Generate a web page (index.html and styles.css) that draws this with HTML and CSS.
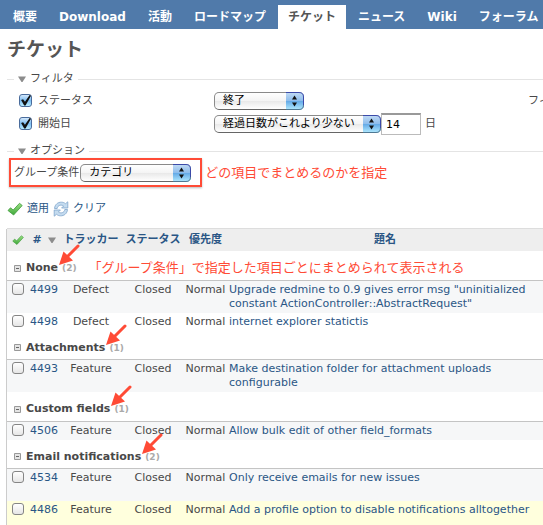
FILE: index.html
```html
<!DOCTYPE html>
<html lang="ja">
<head>
<meta charset="utf-8">
<title>チケット</title>
<link rel="stylesheet" href="styles.css">
</head>
<body>
<svg class="defs" aria-hidden="true">
  <defs>
    <linearGradient id="green" x1="0" y1="0" x2="0" y2="1"><stop offset="0" stop-color="#9be083"/><stop offset="1" stop-color="#3fa83a"/></linearGradient>
    <linearGradient id="knob" x1="0" y1="0" x2="0" y2="1"><stop offset="0" stop-color="#c4dcf5"/><stop offset=".48" stop-color="#8ebdec"/><stop offset=".5" stop-color="#62a8e6"/><stop offset="1" stop-color="#b4ecff"/></linearGradient>
    <symbol id="tick" viewBox="0 0 16 16"><path d="M1 9.500 3.500 6.800 6.200 9 12.500 2.300 15.200 4.500 6.600 14z" fill="url(#green)" stroke="#3f9a3c" stroke-width=".8" stroke-linejoin="round"/></symbol>
    <symbol id="reload" viewBox="0 0 16 16"><g fill="#c4dbef" stroke="#7fa5cb" stroke-width=".8" stroke-linejoin="round"><path d="M1.500 7.500C1.800 3.500 5 1 8.500 1.200c1.700 0 3 .6 4 1.500L14.800.800V7H8.600l2-2C8.200 3.200 4.600 4.300 4.200 7.500z"/><path d="M14.500 8.500c-.3 4-3.500 6.500-7 6.300-1.700 0-3-.6-4-1.500L1.200 15.200V9h6.200l-2 2c2.400 1.800 6 .7 6.400-2.500z"/></g></symbol>
    <symbol id="updown" viewBox="0 0 18 18"><path d="M0 0h13q5 0 5 5v8q0 5-5 5H0z" fill="url(#knob)"/><path d="M0 .5h13q4.500 0 4.500 4.500v8" fill="none" stroke="#3c4aa8"/><path d="M17.500 13q0 4.500-4.500 4.500H0" fill="none" stroke="#4f7893"/><path d="M6 7.500 8.500 3.500 11 7.500zM6 10.500h5L8.500 14.500z" fill="#111"/></symbol>
    <symbol id="arrow" viewBox="0 0 22 22"><path d="M20 2 10 12" stroke="#ff4b36" stroke-width="3" stroke-linecap="round"/><path d="M1 21 5.500 7.500 15 16.500z" fill="#ff4b36"/></symbol>
    <symbol id="minus" viewBox="0 0 7 7"><path d="M.5.5h6v6h-6z" fill="#e4e4e4" stroke="#999"/><path d="M2 3.500h3" stroke="#666"/></symbol>
    <symbol id="down" viewBox="0 0 8 6"><path d="M0 .5h8L4.500 6h-1z" fill="#8c8c8c"/></symbol>
  </defs>
</svg>
<nav class="menu">
  <a href="#">概要</a><a href="#">Download</a><a href="#">活動</a><a href="#">ロードマップ</a><a href="#" class="selected">チケット</a><a href="#">ニュース</a><a href="#">Wiki</a><a href="#">フォーラム</a>
</nav>
<main class="content">
  <h1>チケット</h1>
  <form>
    <section class="panel">
      <h2><svg class="fold"><use href="#down"/></svg>フィルタ</h2>
      <div class="filters">
        <div class="filter">
          <label class="name"><input type="checkbox" class="check" checked>ステータス</label>
          <span class="popup status"><select aria-label="ステータス"><option>終了</option></select><svg><use href="#updown"/></svg></span>
          <span class="add">フィルタ追加</span>
        </div>
        <div class="filter">
          <label class="name"><input type="checkbox" class="check" checked>開始日</label>
          <span class="popup period"><select aria-label="開始日"><option>経過日数がこれより少ない</option></select><svg><use href="#updown"/></svg></span>
          <input type="text" class="days" id="days" value="14"><label class="unit" for="days">日</label>
        </div>
      </div>
    </section>
    <section class="panel">
      <h2><svg class="fold"><use href="#down"/></svg>オプション</h2>
      <div class="options">
        <div class="grouping">
          <label for="group">グループ条件</label>
          <span class="popup group"><select id="group"><option>カテゴリ</option></select><svg><use href="#updown"/></svg></span>
        </div>
        <span class="note">どの項目でまとめるのかを指定</span>
      </div>
    </section>
    <div class="actions">
      <a href="#"><svg><use href="#tick"/></svg>適用</a>
      <a href="#"><svg><use href="#reload"/></svg>クリア</a>
    </div>
  </form>
  <table class="issues">
    <colgroup><col class="c-check"><col class="c-id"><col class="c-mid"><col class="c-mid"><col class="c-priority"><col></colgroup>
    <thead>
      <tr><th><svg class="all"><use href="#tick"/></svg></th><th><a href="#">#</a> <svg class="sort"><use href="#down"/></svg></th><th><a href="#">トラッカー</a></th><th><a href="#">ステータス</a></th><th><a href="#">優先度</a></th><th><a href="#">題名</a></th></tr>
    </thead>
    <tbody>
      <tr class="head"><td colspan="6"><div><svg class="minus"><use href="#minus"/></svg><b>None<svg class="arrow"><use href="#arrow"/></svg></b><span class="count">(2)</span><span class="note">「グループ条件」で指定した項目ごとにまとめられて表示される</span></div></td></tr>
      <tr class="odd tall"><td><input type="checkbox" class="pick" aria-label="4499"></td><td><a href="#">4499</a></td><td>Defect</td><td>Closed</td><td>Normal</td><td class="subject"><a href="#">Upgrade redmine to 0.9 gives error msg "uninitialized<br>constant ActionController::AbstractRequest"</a></td></tr>
      <tr><td><input type="checkbox" class="pick" aria-label="4498"></td><td><a href="#">4498</a></td><td>Defect</td><td>Closed</td><td>Normal</td><td class="subject"><a href="#">internet explorer statictis</a></td></tr>
      <tr class="head"><td colspan="6"><div><svg class="minus"><use href="#minus"/></svg><b>Attachments<svg class="arrow"><use href="#arrow"/></svg></b><span class="count">(1)</span></div></td></tr>
      <tr class="odd tall"><td><input type="checkbox" class="pick" aria-label="4493"></td><td><a href="#">4493</a></td><td>Feature</td><td>Closed</td><td>Normal</td><td class="subject"><a href="#">Make destination folder for attachment uploads<br>configurable</a></td></tr>
      <tr class="head"><td colspan="6"><div><svg class="minus"><use href="#minus"/></svg><b>Custom fields<svg class="arrow"><use href="#arrow"/></svg></b><span class="count">(1)</span></div></td></tr>
      <tr class="odd"><td><input type="checkbox" class="pick" aria-label="4506"></td><td><a href="#">4506</a></td><td>Feature</td><td>Closed</td><td>Normal</td><td class="subject"><a href="#">Allow bulk edit of other field_formats</a></td></tr>
      <tr class="head"><td colspan="6"><div><svg class="minus"><use href="#minus"/></svg><b>Email notifications<svg class="arrow"><use href="#arrow"/></svg></b><span class="count">(2)</span></div></td></tr>
      <tr class="odd tall"><td><input type="checkbox" class="pick" aria-label="4534"></td><td><a href="#">4534</a></td><td>Feature</td><td>Closed</td><td>Normal</td><td class="subject"><a href="#">Only receive emails for new issues</a></td></tr>
      <tr class="hover tall"><td><input type="checkbox" class="pick" aria-label="4486"></td><td><a href="#">4486</a></td><td>Feature</td><td>Closed</td><td>Normal</td><td class="subject"><a href="#">Add a profile option to disable notifications alltogether</a></td></tr>
    </tbody>
  </table>
</main>
</body>
</html>
```
FILE: styles.css
```css
* { box-sizing: border-box; }
body {
  margin: 0;
  overflow: hidden;
  background: #fff;
  color: #484848;
  font: 11px/14px "DejaVu Sans", "Noto Sans CJK JP", sans-serif;
}
a { color: #2a5685; text-decoration: none; }
svg { display: block; flex: none; }
.defs { position: absolute; width: 0; height: 0; }

.menu {
  display: flex;
  gap: 2px;
  padding: 5px 3px 0;
  background: #507aaa;
  font-size: 12px;
  font-weight: bold;
  line-height: 24px;
  white-space: nowrap;
}
.menu a { padding: 0 10px; color: #fff; }
.menu .selected { background: #fff; color: #555; }

.content { padding: 8px 0 0 7px; }
h1 { margin: 0 0 11px; font-size: 19px; line-height: 24px; color: #555; }

.panel h2 {
  display: flex;
  align-items: center;
  height: 14px;
  margin: 0;
  font-size: 11px;
  font-weight: normal;
}
.panel h2::before { content: ""; width: 7px; margin-right: 4px; border-top: 1px solid #e4e4e4; }
.panel h2::after { content: ""; flex: 1; margin-left: 4px; border-top: 1px solid #e4e4e4; }
.fold { width: 8px; height: 6px; margin-right: 4px; }

.filters { padding: 3px 0 9px; }
.filter { display: flex; align-items: center; height: 23px; padding-left: 12px; white-space: nowrap; }
.name { display: flex; align-items: center; gap: 6px; width: 195px; }
.check, .pick {
  appearance: none;
  display: block;
  width: 12px;
  height: 12px;
  margin: 0;
  border: 1px solid #858585;
  border-radius: 3px;
  background: linear-gradient(#fff, #e6e6e6);
}
.check { width: 13px; height: 13px; border-color: #4a6c9c; background: linear-gradient(#d4e8fb, #7dbdf2 50%, #b8ecff); }
.check::before {
  content: "";
  display: block;
  height: 11px;
  background: #111;
  clip-path: polygon(10% 45%, 28% 38%, 45% 62%, 88% 0, 100% 6%, 50% 96%, 38% 96%);
}
.popup { position: relative; display: block; }
.popup select {
  appearance: none;
  display: block;
  width: 100%;
  height: 18px;
  padding: 0 20px 0 8px;
  border: 1px solid #8a8a8a;
  border-bottom-color: #666;
  border-radius: 5px;
  background: linear-gradient(#fff, #f4f4f4 50%, #e8e8e8 50%, #fff);
  color: #000;
  font: inherit;
  line-height: 16px;
}
.popup svg { position: absolute; top: 0; right: 0; width: 18px; height: 18px; pointer-events: none; }
.status { width: 90px; }
.period { width: 167px; }
.group { width: 111px; }
.add { margin-left: auto; width: 15px; overflow: hidden; }
.days {
  width: 40px;
  height: 22px;
  padding: 0 4px;
  border: 1px solid #bbb;
  border-top: 2px solid #999;
  border-radius: 0;
  color: #000;
  font: inherit;
}
.unit { margin-left: 4px; }

.options { display: flex; align-items: center; padding-left: 2px; gap: 3px; }
.grouping {
  display: flex;
  align-items: center;
  gap: 1px;
  height: 29px;
  padding: 0 9px 0 3px;
  border: 2px solid #ff4b36;
  box-shadow: 0 1px 2px #bbb;
}
.note { color: #ff4b36; font-size: 13px; line-height: 16px; white-space: nowrap; }

.actions { display: flex; gap: 4px; padding: 14px 0 12px; line-height: 16px; }
.actions a { display: flex; align-items: center; gap: 4px; }
.actions svg { width: 16px; height: 16px; }

.issues {
  width: 100%;
  table-layout: fixed;
  border-collapse: collapse;
  box-shadow: -1px 0 #ccc, 0 -1px #ddd;
}
.c-check { width: 21px; }
.c-id { width: 32px; }
.c-mid { width: 62px; }
.c-priority { width: 43px; }
.issues th { height: 22px; padding: 0; background: #eee; white-space: nowrap; }
.issues td { padding: 2px 0; text-align: center; vertical-align: top; white-space: nowrap; }
.issues .subject { padding-left: 2px; text-align: left; }
.all { width: 12px; height: 12px; margin: 0 auto; }
.sort { display: inline-block; width: 8px; height: 6px; margin-left: 2px; }
.pick { margin: 0 auto; }
.tall { height: 32px; }
.odd { background: #f6f7f8; }
.hover { background: #ffffdd; }
.issues .head td { height: 29px; padding: 9px 0 0 7px; border-bottom: 1px solid #c4c4c4; }
.head div { display: flex; align-items: center; height: 16px; }
.head b { position: relative; margin: 0 4px 0 5px; }
.minus { width: 7px; height: 7px; }
.count { color: #aaa; font-size: 9px; font-weight: bold; }
.head .note { margin-left: 12px; }
.arrow { position: absolute; left: 100%; bottom: 9px; width: 22px; height: 22px; }
```
